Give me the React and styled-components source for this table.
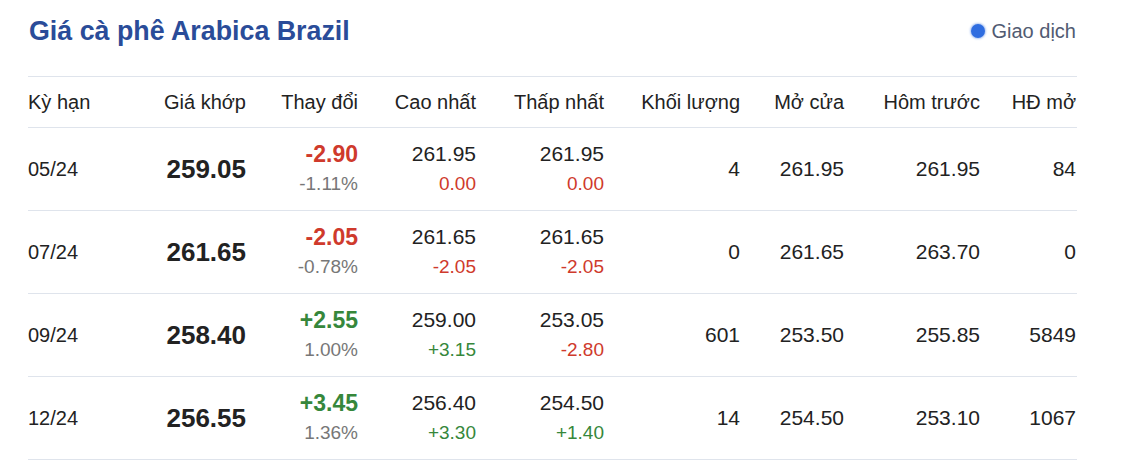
import React from "react";
import styled, { createGlobalStyle } from "styled-components";

const Global = createGlobalStyle`
  html, body { margin: 0; padding: 0; background: #fff; }
  body { font-family: "Liberation Sans", Arial, sans-serif; color: #222; }
`;

const COLS = "122px 96px 112px 118px 128px 136px 104px 136px 96px";

const Page = styled.div`
  width: 1049px;
  padding: 0 0 0 28px;
`;

const TopBar = styled.div`
  height: 62px;
  margin-bottom: 14px;
  display: flex;
  align-items: center;
  justify-content: space-between;
`;

const Title = styled.h1`
  margin: 0;
  font-size: 26.8px;
  font-weight: 700;
  color: #2a4c99;
  padding-left: 1px;
`;

const Status = styled.div`
  display: flex;
  align-items: center;
  gap: 7px;
  font-size: 20px;
  color: #515b72;
  padding-right: 1px;
`;

const Dot = styled.span`
  width: 14px;
  height: 14px;
  border-radius: 50%;
  background: #2f6de0;
  box-shadow: 0 0 2px 1px rgba(47, 109, 224, 0.4);
`;

const Table = styled.div`
  border-top: 1px solid #dfe4ec;
`;

const Row = styled.div`
  display: grid;
  grid-template-columns: ${COLS};
  height: ${(p) => (p.$head ? "50px" : "82px")};
  align-items: center;
  border-bottom: 1px solid #dfe4ec;
`;

const Cell = styled.div`
  text-align: ${(p) => (p.$left ? "left" : "right")};
  font-size: ${(p) => (p.$big ? "26px" : p.$head || p.$left ? "20px" : "21px")};
  font-weight: ${(p) => (p.$big ? 700 : 400)};
  white-space: nowrap;
  color: #222;
`;

const Stack = styled.div`
  display: flex;
  flex-direction: column;
  align-items: flex-end;
  line-height: 30px;
`;

const Main = styled.span`
  font-size: ${(p) => (p.$bold ? "23px" : "21px")};
  font-weight: ${(p) => (p.$bold ? 700 : 400)};
  color: ${(p) => (p.$tone === "up" ? "#36873b" : p.$tone === "down" ? "#cf3a2c" : "#222")};
`;

const Sub = styled.span`
  font-size: 19px;
  color: ${(p) => (p.$tone === "up" ? "#36873b" : p.$tone === "down" ? "#cf3a2c" : "#777")};
`;

const tone = (s) => (s.startsWith("+") ? "up" : s.startsWith("-") || s === "0.00" ? "down" : "flat");

const rows = [
  { term: "05/24", price: "259.05", chg: "-2.90", pct: "-1.11%", hi: "261.95", hiC: "0.00", lo: "261.95", loC: "0.00", vol: "4", open: "261.95", prev: "261.95", oi: "84" },
  { term: "07/24", price: "261.65", chg: "-2.05", pct: "-0.78%", hi: "261.65", hiC: "-2.05", lo: "261.65", loC: "-2.05", vol: "0", open: "261.65", prev: "263.70", oi: "0" },
  { term: "09/24", price: "258.40", chg: "+2.55", pct: "1.00%", hi: "259.00", hiC: "+3.15", lo: "253.05", loC: "-2.80", vol: "601", open: "253.50", prev: "255.85", oi: "5849" },
  { term: "12/24", price: "256.55", chg: "+3.45", pct: "1.36%", hi: "256.40", hiC: "+3.30", lo: "254.50", loC: "+1.40", vol: "14", open: "254.50", prev: "253.10", oi: "1067" },
];

const heads = ["Kỳ hạn", "Giá khớp", "Thay đổi", "Cao nhất", "Thấp nhất", "Khối lượng", "Mở cửa", "Hôm trước", "HĐ mở"];

export default function App() {
  return (
    <>
      <Global />
      <Page>
        <TopBar>
          <Title>Giá cà phê Arabica Brazil</Title>
          <Status>
            <Dot />
            Giao dịch
          </Status>
        </TopBar>
        <Table>
          <Row $head>
            {heads.map((h, i) => (
              <Cell key={h} $head $left={i === 0}>
                {h}
              </Cell>
            ))}
          </Row>
          {rows.map((r) => (
            <Row key={r.term}>
              <Cell $left>{r.term}</Cell>
              <Cell $big>{r.price}</Cell>
              <Cell>
                <Stack>
                  <Main $bold $tone={r.chg.startsWith("+") ? "up" : "down"}>{r.chg}</Main>
                  <Sub>{r.pct}</Sub>
                </Stack>
              </Cell>
              <Cell>
                <Stack>
                  <Main>{r.hi}</Main>
                  <Sub $tone={tone(r.hiC)}>{r.hiC}</Sub>
                </Stack>
              </Cell>
              <Cell>
                <Stack>
                  <Main>{r.lo}</Main>
                  <Sub $tone={tone(r.loC)}>{r.loC}</Sub>
                </Stack>
              </Cell>
              <Cell>{r.vol}</Cell>
              <Cell>{r.open}</Cell>
              <Cell>{r.prev}</Cell>
              <Cell>{r.oi}</Cell>
            </Row>
          ))}
        </Table>
      </Page>
    </>
  );
}
